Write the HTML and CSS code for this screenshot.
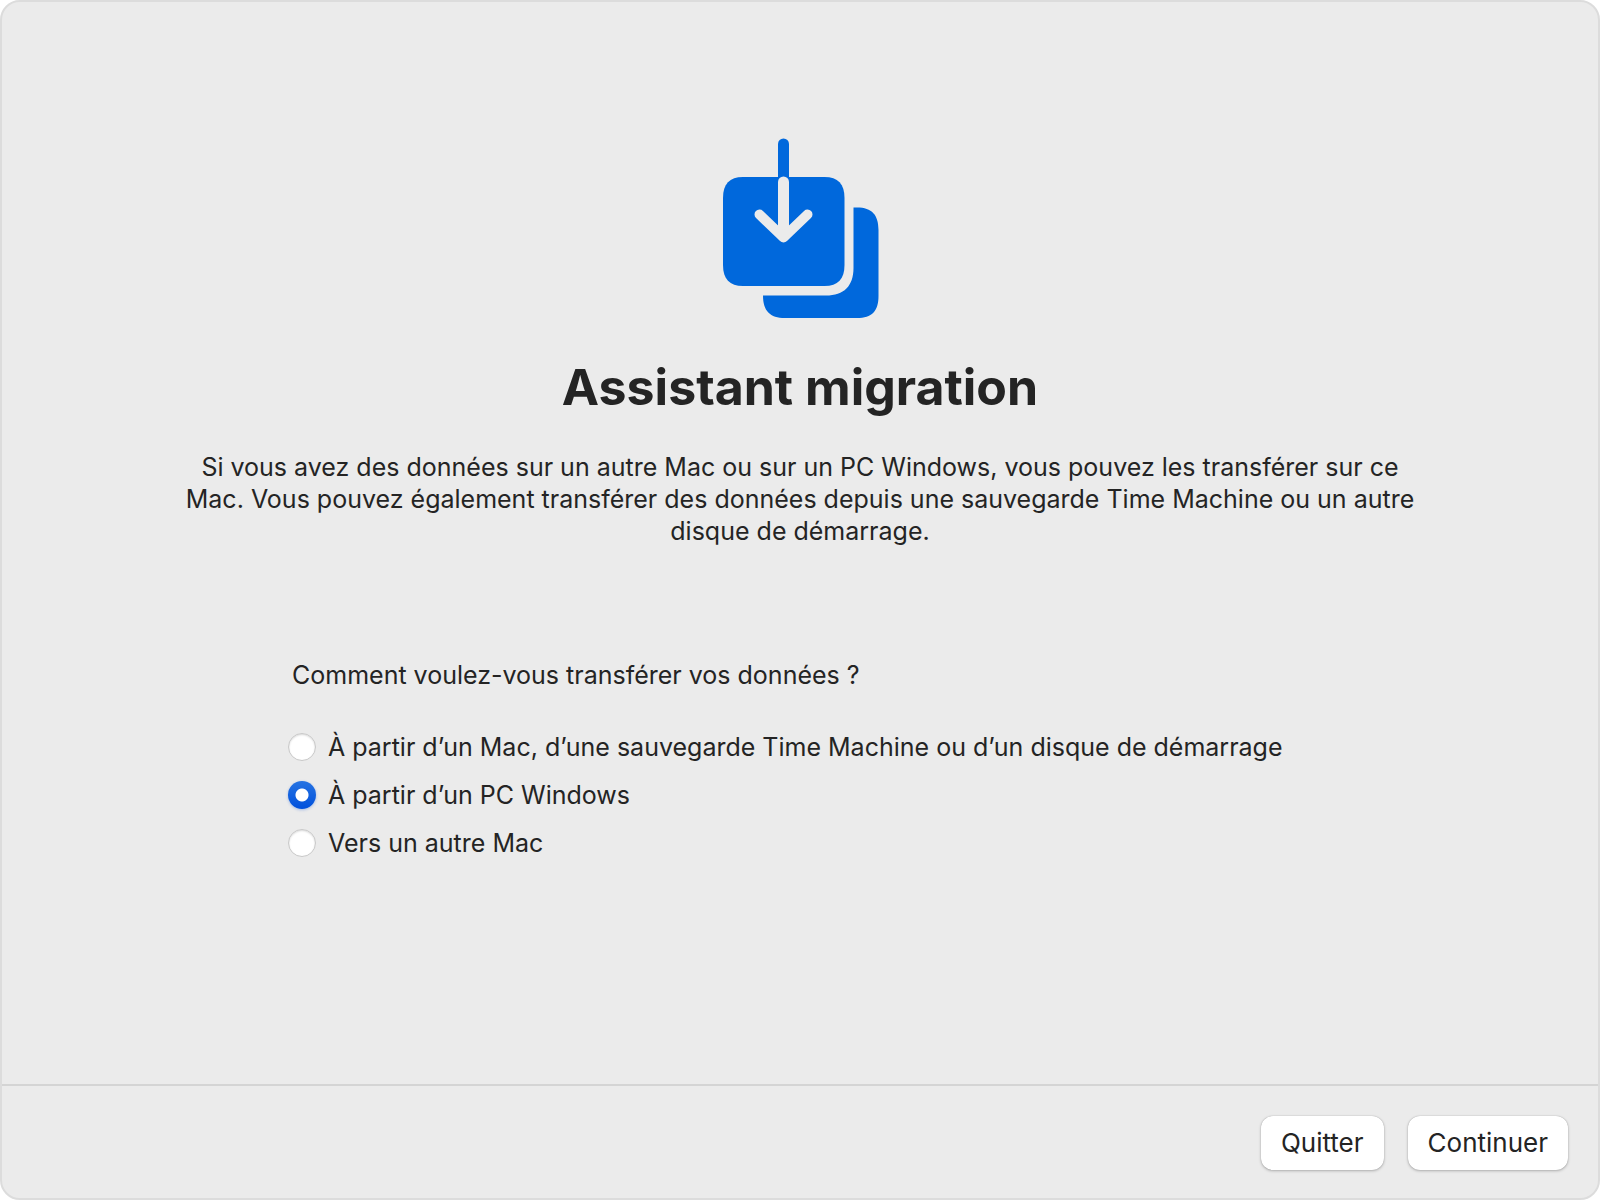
FILE: index.html
```html
<!DOCTYPE html>
<html lang="fr">
<head>
    <meta charset="UTF-8">
    <meta name="viewport" content="width=device-width, initial-scale=1.0">
    <title>Assistant migration</title>
    <link rel="stylesheet" href="styles.css">
</head>
<body>
    <form class="window">
        <main class="content">
            <svg class="migration-icon" viewBox="-2 0 158 180" aria-hidden="true">
                <!-- Carte arrière -->
                <path class="icon-card" d="M130.500 69.500H134C149 69.500 155.500 77 155.500 92V158C155.500 173 149 180 134 180H62C47 180 40 173 40 157.500H103C121 157.500 130.500 148 130.500 130Z"/>
                <!-- Carte avant -->
                <path class="icon-card" d="M20 39H101.500C115 39 121.500 46 121.500 60V127C121.500 141 115 148 101.500 148H20C6.500 148 0 141 0 127V60C0 46 6.500 39 20 39Z"/>
                <path class="icon-stem" d="M60.500 6V39"/>
                <path class="icon-arrow-line" d="M60.500 44V98"/>
                <path class="icon-arrow-head" d="M36.500 76.500L60.500 99.500L84.500 76.500"/>
            </svg>

            <h1 class="title">Assistant migration</h1>

            <p class="description">Si vous avez des données sur un autre Mac ou sur un PC Windows, vous pouvez les transférer sur ce Mac. Vous pouvez également transférer des données depuis une sauvegarde Time Machine ou un autre disque de démarrage.</p>

            <fieldset class="options">
                <legend class="question">Comment voulez-vous transférer vos données ?</legend>
                <label class="option">
                    <input type="radio" name="source" value="mac">
                    <span>À partir d’un Mac, d’une sauvegarde Time Machine ou d’un disque de démarrage</span>
                </label>
                <label class="option">
                    <input type="radio" name="source" value="windows" checked>
                    <span>À partir d’un PC Windows</span>
                </label>
                <label class="option">
                    <input type="radio" name="source" value="autre-mac">
                    <span>Vers un autre Mac</span>
                </label>
            </fieldset>
        </main>

        <footer class="footer">
            <button type="button" class="button">Quitter</button>
            <button type="button" class="button">Continuer</button>
        </footer>
    </form>
</body>
</html>
```
FILE: styles.css
```css
:root {
    --window-bg: #ebebeb;
    --window-border: #dcdcdc;
    --separator: #d4d4d4;
    --text-color: #242424;
    --accent-color: #0068dc;
    --white: #ffffff;
}

* {
    box-sizing: border-box;
    margin: 0;
    padding: 0;
}

body {
    font-family: Inter, "Liberation Sans", sans-serif;
    font-size: 25px;
    line-height: 32px;
    color: var(--text-color);
    background-color: var(--white);
}

.window {
    display: flex;
    flex-direction: column;
    min-height: 100vh;
    background-color: var(--window-bg);
    border: 2px solid var(--window-border);
    border-radius: 20px;
}

.content {
    flex: 1;
    display: flex;
    flex-direction: column;
    align-items: center;
    padding: 136px 40px 40px;
}

/* Icône */
.migration-icon {
    width: 158px;
    height: 180px;
}

.icon-card {
    fill: var(--accent-color);
}

.icon-stem,
.icon-arrow-line,
.icon-arrow-head {
    fill: none;
    stroke-width: 11;
    stroke-linecap: round;
    stroke-linejoin: round;
}

.icon-stem {
    stroke: var(--accent-color);
}

.icon-arrow-line,
.icon-arrow-head {
    stroke: var(--window-bg);
}

.icon-arrow-head {
    stroke-width: 10;
}

/* Textes */
.title {
    margin-top: 37px;
    font-size: 50px;
    font-weight: 700;
    line-height: 64px;
}

.description {
    max-width: 1248px;
    margin-top: 32px;
    text-align: center;
}

/* Choix de la source */
.options {
    width: 100%;
    max-width: 1024px;
    margin-top: 112px;
    border: none;
}

.question {
    padding-left: 4px;
    margin-bottom: 40px;
}

.option {
    display: flex;
    align-items: center;
    gap: 12px;
    margin-bottom: 16px;
}

.option input {
    appearance: none;
    flex: none;
    width: 28px;
    height: 28px;
    border: 1px solid #c8c8c8;
    border-radius: 50%;
    background-color: var(--white);
    box-shadow: inset 0 1px 2px rgba(0, 0, 0, 0.15);
}

.option input:checked {
    border: none;
    background: radial-gradient(circle, var(--white) 6px, transparent 7px), linear-gradient(#2673e2, #0050dc);
    box-shadow: 0 1px 3px rgba(0, 80, 220, 0.3);
}

/* Boutons */
.footer {
    display: flex;
    justify-content: flex-end;
    gap: 24px;
    padding: 30px 30px 28px;
    border-top: 2px solid var(--separator);
}

.button {
    height: 54px;
    padding: 0 20px;
    font: inherit;
    font-size: 26px;
    color: inherit;
    background-color: var(--white);
    border: none;
    border-radius: 12px;
    box-shadow: 0 0 1px rgba(0, 0, 0, 0.3), 0 1px 3px rgba(0, 0, 0, 0.25);
}
```
